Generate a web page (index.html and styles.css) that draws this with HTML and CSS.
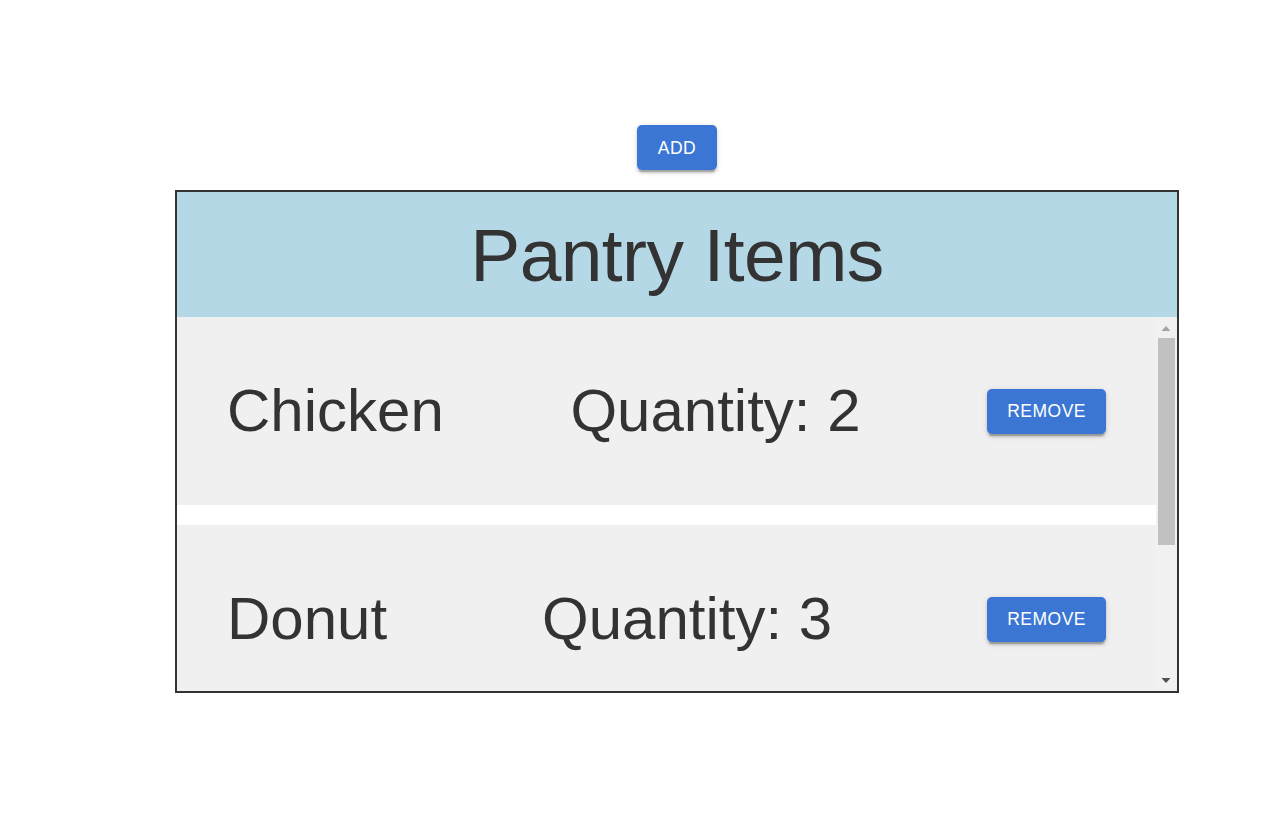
FILE: index.html
```html
<!DOCTYPE html>
<html lang="en">
<head>
<meta charset="utf-8">
<title>Pantry Items</title>
<link rel="stylesheet" href="styles.css">
</head>
<body>
<main class="page">
  <button class="btn">Add</button>
  <section class="pantry">
    <header class="pantry-header">
      <h2 class="pantry-title">Pantry Items</h2>
    </header>
    <div class="pantry-body">
      <div class="pantry-list">
        <div class="item">
          <h3 class="item-text">Chicken</h3>
          <h3 class="item-text">Quantity: 2</h3>
          <button class="btn">Remove</button>
        </div>
        <div class="item">
          <h3 class="item-text">Donut</h3>
          <h3 class="item-text">Quantity: 3</h3>
          <button class="btn">Remove</button>
        </div>
      </div>
      <div class="scrollbar" aria-hidden="true">
        <div class="sb-button">
          <svg width="21" height="21" viewBox="0 0 21 21"><polygon points="5.5,14 14.5,14 10,9" fill="#a3a3a3"/></svg>
        </div>
        <div class="sb-track">
          <div class="sb-thumb"></div>
        </div>
        <div class="sb-button">
          <svg width="21" height="21" viewBox="0 0 21 21"><polygon points="5.5,8 14.5,8 10,13" fill="#505050"/></svg>
        </div>
      </div>
    </div>
  </section>
</main>
</body>
</html>
```

FILE: styles.css
```css
* { box-sizing: border-box; }

html, body {
  margin: 0;
  padding: 0;
  background: #ffffff;
  font-family: "Liberation Sans", Arial, Helvetica, sans-serif;
}

.page {
  width: 1287px;
  height: 827px;
  display: flex;
  flex-direction: column;
  align-items: center;
  gap: 20px;
  padding-top: 125px;
  padding-left: 67px;
}

.btn {
  font-family: "Liberation Sans", Arial, Helvetica, sans-serif;
  font-size: 17.5px;
  font-weight: 400;
  line-height: 30px;
  letter-spacing: 0.5px;
  text-transform: uppercase;
  color: #ffffff;
  background: #3b76d4;
  border: 0;
  border-radius: 5px;
  padding: 7.5px 20px;
  min-width: 80px;
  box-shadow: 0 3.75px 1.25px -2.5px rgba(0,0,0,0.2),
              0 2.5px 2.5px 0 rgba(0,0,0,0.14),
              0 1.25px 6.25px 0 rgba(0,0,0,0.12);
  cursor: pointer;
  flex: none;
}

.pantry {
  width: 1004px;
  border: 2px solid #333333;
  display: flex;
  flex-direction: column;
}

.pantry-header {
  height: 125px;
  background: #b4d8e6;
  display: flex;
  align-items: center;
  justify-content: center;
}

.pantry-title {
  margin: 0;
  font-size: 75px;
  font-weight: 400;
  line-height: 1.2;
  letter-spacing: -0.625px;
  color: #333333;
}

.pantry-body {
  height: 374px;
  display: flex;
}

.pantry-list {
  flex: 1;
  overflow: hidden;
  display: flex;
  flex-direction: column;
  gap: 20px;
}

.item {
  flex: none;
  height: 188px;
  background: #f0f0f0;
  display: flex;
  align-items: center;
  justify-content: space-between;
  padding: 0 50px;
}

.item-text {
  margin: 0;
  font-size: 60px;
  font-weight: 400;
  line-height: 1.167;
  color: #333333;
}

.scrollbar {
  width: 21px;
  flex: none;
  background: #f1f1f1;
  display: flex;
  flex-direction: column;
}

.sb-button {
  height: 21px;
  flex: none;
  display: flex;
}

.sb-track {
  flex: 1;
  padding: 0 2px;
}

.sb-thumb {
  height: 207px;
  background: #c1c1c1;
}
```
